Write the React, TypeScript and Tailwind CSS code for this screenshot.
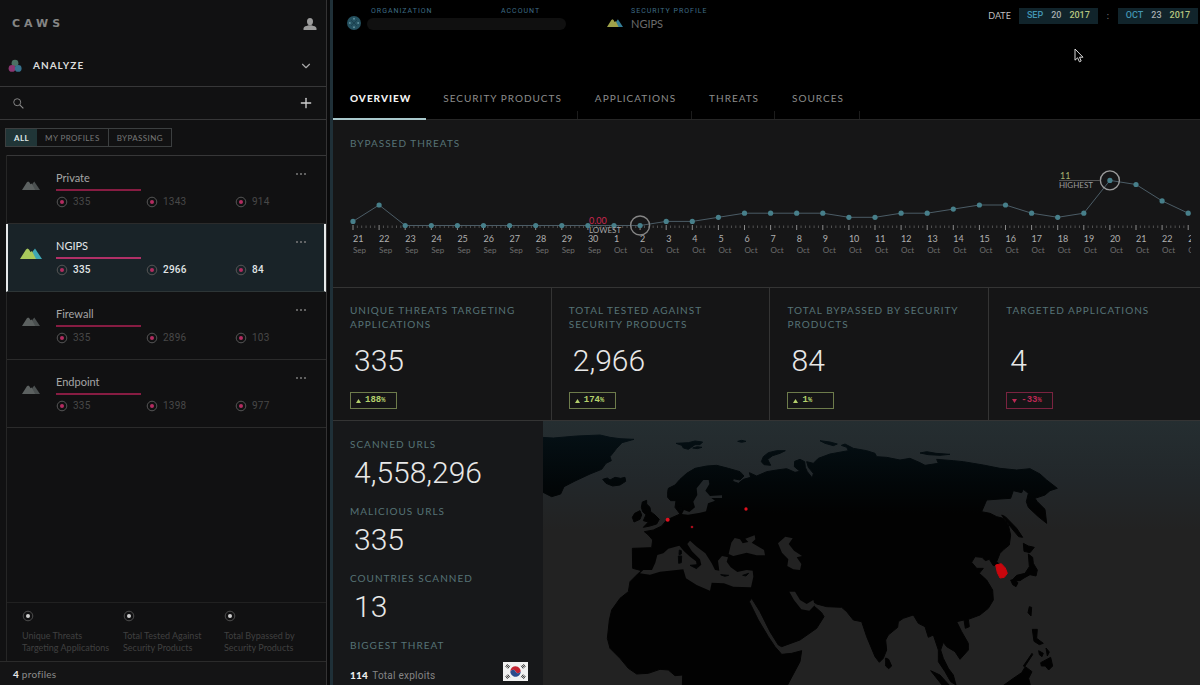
import React from "react";
import { ChevronDown, Plus } from "lucide-react";

const profiles = [
  { name: "Private", values: ["335", "1343", "914"], active: false },
  { name: "NGIPS", values: ["335", "2966", "84"], active: true },
  { name: "Firewall", values: ["335", "2896", "103"], active: false },
  { name: "Endpoint", values: ["335", "1398", "977"], active: false },
];

const legend = [
  ["Unique Threats", "Targeting Applications"],
  ["Total Tested Against", "Security Products"],
  ["Total Bypassed by", "Security Products"],
];

const tabs = ["OVERVIEW", "SECURITY PRODUCTS", "APPLICATIONS", "THREATS", "SOURCES"];

const stats = [
  { label: "UNIQUE THREATS TARGETING APPLICATIONS", value: "335", change: "188", up: true },
  { label: "TOTAL TESTED AGAINST SECURITY PRODUCTS", value: "2,966", change: "174", up: true },
  { label: "TOTAL BYPASSED BY SECURITY PRODUCTS", value: "84", change: "1", up: true },
  { label: "TARGETED APPLICATIONS", value: "4", change: "-33", up: false },
];

const scans = [
  { label: "SCANNED URLS", value: "4,558,296" },
  { label: "MALICIOUS URLS", value: "335" },
  { label: "COUNTRIES SCANNED", value: "13" },
];

const threats = [
  1, 5, 0, 0, 0, 0, 0, 0, 0, 0, 0, 0, 1, 1, 2, 3, 3, 3, 3, 2, 2, 3, 3, 4, 5, 5, 3, 2, 3, 11, 10, 6, 3,
];

function Mountains({ className, left, right }: { className: string; left: string; right: string }) {
  return (
    <svg viewBox="0 0 22 11" className={className} aria-hidden="true">
      <path d="M10 11 L13 3 L15 0.5 L22 11 Z" fill={right} />
      <path d="M0 11 L6 1.5 L7.5 0.5 L9 1.5 L10.5 4 L12 3 L16 11 Z" fill={left} />
    </svg>
  );
}

function Target({ ring, dot }: { ring: string; dot: string }) {
  return (
    <svg viewBox="0 0 12 12" className="size-3 shrink-0" aria-hidden="true">
      <circle cx="6" cy="6" r="4.8" fill="none" stroke={ring} strokeWidth="1" />
      <circle cx="6" cy="6" r="2" fill={dot} />
    </svg>
  );
}

function Sidebar() {
  return (
    <aside className="flex w-[327px] shrink-0 flex-col border-r border-[#343334] bg-[#111112]">
      <div className="flex h-[46px] items-center justify-between pt-[2px] pr-[9px] pl-3">
        <span className="font-['DejaVu_Sans'] text-[11px] font-bold tracking-[4px] text-[#858585]">CAWS</span>
        <button aria-label="Account">
          <svg viewBox="0 0 14 12" className="h-3 w-[14px]" fill="#9b9b9b" aria-hidden="true">
            <ellipse cx="7" cy="3.6" rx="3" ry="3.6" />
            <path d="M0.5 12 V10.5 Q0.5 8.4 3.6 7.9 L5.4 7.2 H8.6 L10.4 7.9 Q13.5 8.4 13.5 10.5 V12 Z" />
          </svg>
        </button>
      </div>
      <button className="flex h-[41px] items-center border-b border-[#373738] pr-[13px] pb-px pl-2 text-left">
        <svg viewBox="0 0 14 14" className="size-[14px]" aria-hidden="true">
          <circle cx="7" cy="4.2" r="3.4" fill="#4b7164" />
          <circle cx="4" cy="9.4" r="3.4" fill="#8a3670" />
          <circle cx="10.2" cy="9.4" r="3.4" fill="#36718c" />
        </svg>
        <span className="ml-[11px] flex-1 text-[10px] font-bold tracking-[1px] text-[#dcdcdc]">ANALYZE</span>
        <ChevronDown className="size-[14px] text-[#a9a9a9]" strokeWidth={2} />
      </button>
      <div className="flex h-[33px] items-center border-b border-[#373738] pr-3 pl-[13px]">
        <svg viewBox="0 0 12 12" className="size-[11px]" fill="none" stroke="#8d8d8d" aria-hidden="true">
          <circle cx="4.6" cy="4.6" r="3.8" />
          <path d="M7.4 7.4 L11.3 11.3" strokeWidth="1.2" />
        </svg>
        <input type="search" aria-label="Search profiles" className="mx-2 min-w-0 flex-1 bg-transparent text-xs text-[#cfcfcf] outline-none" />
        <button aria-label="Add profile">
          <Plus className="size-4 text-[#d0d0d0]" strokeWidth={2} />
        </button>
      </div>
      <div className="flex h-[35px] items-center pl-[5px]">
        <div className="flex h-[19px] border border-[#3c3f40] text-[8px] tracking-wider text-[#777]">
          <button className="bg-[#203537] px-2 font-bold text-[#dfe8e8]">ALL</button>
          <button className="px-2">MY PROFILES</button>
          <button className="border-l border-[#3c3f40] px-2">BYPASSING</button>
        </div>
      </div>
      <div className="ml-[6px] flex flex-1 flex-col border-l border-[#262626]">
        <ul className="border-t border-[#373738]">
          {profiles.map((p) => (
            <li
              key={p.name}
              className={
                p.active
                  ? "-ml-px flex h-[68px] border-x-2 border-b border-x-[#e6e9ea] border-b-[#2d3536] bg-[#192328] pr-[18px] pl-[13px]"
                  : "flex h-[68px] border-b border-[#2b2b2b] pr-5 pl-[14px]"
              }
            >
              <div className="flex w-[35px] shrink-0 items-start pt-6">
                {p.active ? (
                  <Mountains className="-ml-px h-[11px] w-[22px]" left="#a9c95c" right="#3fa7b5" />
                ) : (
                  <Mountains className="mt-px ml-px h-[9px] w-[18px]" left="#5c6160" right="#4b5050" />
                )}
              </div>
              <div className="flex-1 pt-[15px]">
                <h3 className={p.active ? "text-[11px] leading-[14px] text-[#e3e7e8]" : "text-[11px] leading-[14px] text-[#a5a5a5]"}>{p.name}</h3>
                <div className={p.active ? "mt-1 h-[2px] w-[85px] bg-[#b13067]" : "mt-1 h-[2px] w-[85px] bg-[#871c42]"} />
                <div
                  className={
                    p.active
                      ? "mt-[5px] grid grid-cols-[90px_89px_1fr] font-['Roboto'] text-[10px] leading-3 font-medium tracking-wide text-[#e0e5e6]"
                      : "mt-[5px] grid grid-cols-[90px_89px_1fr] font-['Roboto'] text-[10px] leading-3 tracking-wide text-[#484848]"
                  }
                >
                  {p.values.map((v) => (
                    <span key={v} className="flex items-center gap-[5px]">
                      <Target ring="#555" dot="#b32c60" />
                      {v}
                    </span>
                  ))}
                </div>
              </div>
              <button aria-label={`${p.name} options`} className="mt-[17px] flex h-1 gap-[2px]">
                <span className="size-[2px] rounded-full bg-[#7b7b7b]" />
                <span className="size-[2px] rounded-full bg-[#7b7b7b]" />
                <span className="size-[2px] rounded-full bg-[#7b7b7b]" />
              </button>
            </li>
          ))}
        </ul>
        <div className="flex-1" />
        <div className="grid h-[59px] grid-cols-[101px_101px_1fr] border-t border-[#212121] pt-[7px] pl-[15px]">
          {legend.map(([a, b]) => (
            <div key={a} className="text-[9px] leading-3 whitespace-nowrap text-[#404040]">
              <Target ring="#4c4c4c" dot="#cfcfcf" />
              <p className="mt-2">
                {a}
                <br />
                {b}
              </p>
            </div>
          ))}
        </div>
      </div>
      <footer className="h-6 border-t border-[#2b2b2b] bg-[#141415] pl-[13px] text-[10px] leading-[24px] tracking-wide text-[#8c8c8c]">
        <b className="text-[#e8e8e8]">4</b> profiles
      </footer>
    </aside>
  );
}

function DateField({ month, day, year }: { month: string; day: string; year: string }) {
  return (
    <button className="flex h-4 items-center gap-2 bg-[#11242b] px-2 font-['Roboto'] text-[9px] font-medium">
      <span className="text-[#4295b3]">{month}</span>
      <span className="text-[#a5acae]">{day}</span>
      <span className="text-[#b7c67f]">{year}</span>
    </button>
  );
}

function Header() {
  return (
    <header className="relative flex h-[120px] flex-col justify-between border-b border-[#262626] bg-black">
      <div className="flex items-start justify-between pt-[7px] pr-[2px] pl-[14px]">
        <div className="flex items-start">
          <svg viewBox="0 0 14 14" className="mt-[9px] size-[14px]" aria-hidden="true">
            <circle cx="7" cy="7" r="7" fill="#24505f" />
            <g fill="#5e8d99">
              <circle cx="7" cy="2.8" r="1" />
              <circle cx="7" cy="11.2" r="1" />
              <circle cx="2.8" cy="7" r="1" />
              <circle cx="11.2" cy="7" r="1" />
            </g>
            <path d="M4 4 L10 10 M10 4 L4 10" stroke="#1b4150" strokeWidth="1" />
          </svg>
          <div className="ml-[6px] w-[240px] font-['Roboto'] text-[7px] leading-[9px] tracking-[1px] text-[#3f6c86]">
            <div className="grid grid-cols-[130px_1fr] pl-1">
              <span>ORGANIZATION</span>
              <span>ACCOUNT</span>
            </div>
            <div className="mt-[2px] h-3 w-[199px] rounded-full bg-[#101010]" />
          </div>
          <Mountains className="mt-3 h-2 w-4" left="#9fa24a" right="#357d96" />
          <div className="ml-2">
            <p className="font-['Roboto'] text-[7px] leading-[9px] tracking-[1px] text-[#3f6c86]">SECURITY PROFILE</p>
            <p className="text-[11px] leading-4 text-[#6b6b6b]">NGIPS</p>
          </div>
        </div>
        <div className="flex items-center pt-px text-[9px] text-[#bfbfbf]">
          <span>DATE</span>
          <span className="ml-2">
            <DateField month="SEP" day="20" year="2017" />
          </span>
          <span className="w-5 text-center text-[#777]">:</span>
          <DateField month="OCT" day="23" year="2017" />
        </div>
      </div>
      <nav className="flex text-[10px] leading-3 tracking-[1px]">
        {tabs.map((t, i) => (
          <a
            key={t}
            href="#"
            className={
              i === 0
                ? "-mb-px flex h-[28px] items-start border-b-2 border-[#a9c9cd] pr-[15px] pl-[17px] font-black text-[#f2f2f2]"
                : "flex h-[27px] items-start bg-[linear-gradient(#1c1c1c,#1c1c1c)] bg-[length:1px_8px] bg-right-bottom bg-no-repeat pr-4 pl-[17px] text-[#8c8c8c]"
            }
          >
            {t}
          </a>
        ))}
      </nav>
      <svg viewBox="0 0 10 15" className="absolute top-[48px] right-[116px] h-[15px] w-[10px]" aria-hidden="true">
        <path d="M1 1 V12.2 L3.6 9.8 L5.4 13.8 L7.2 13 L5.5 9.2 H9 Z" fill="#000" stroke="#d8d8d8" strokeWidth="1" />
      </svg>
    </header>
  );
}

function ThreatChart() {
  const step = 26.1;
  const x = (i: number) => 20 + i * step;
  const y = (v: number) => 65.5 - v * 4.1;
  const points = threats.map((v, i) => `${x(i)},${y(v)}`).join(" ");
  return (
    <svg viewBox="0 0 867 110" className="block w-full" role="img" aria-label="Bypassed threats per day">
      <clipPath id="plot">
        <rect x="10" y="0" width="848" height="110" />
      </clipPath>
      <g clipPath="url(#plot)">
        {Array.from({ length: 193 }, (_, i) => (
          <line key={i} x1={20 + i * 4.35} x2={20 + i * 4.35} y1={i % 6 ? 65.5 : 65} y2={i % 6 ? 68 : 70} stroke={i % 6 ? "#505050" : "#8a8a8a"} />
        ))}
        <polyline points={points} fill="none" stroke="#4b5c66" />
        {threats.map((v, i) => {
          const sept = i < 10;
          return (
            <g key={i}>
              <circle cx={x(i)} cy={y(v)} r="2.6" fill="#477f8a" />
              <text x={x(i)} y="82" className="font-['Lato'] text-[9px]" fill="#b0b0b0">
                {sept ? 21 + i : i - 9}
              </text>
              <text x={x(i)} y="93" className="font-['Lato'] text-[8px]" fill="#6e6e6e">
                {sept ? "Sep" : "Oct"}
              </text>
            </g>
          );
        })}
      </g>
      <circle cx={x(11)} cy="65.5" r="9.5" fill="none" stroke="#858585" strokeWidth="1.4" />
      <circle cx={x(29)} cy={y(11)} r="9.5" fill="none" stroke="#9a9a9a" strokeWidth="1.4" />
      <text x="256" y="64" className="font-['Lato'] text-[9px]" fill="#c9264f">0.00</text>
      <text x="256" y="73" className="font-['Lato'] text-[8px]" fill="#a5a5a5">LOWEST</text>
      <line x1="726" x2="767" y1="20.5" y2="20.5" stroke="#555" />
      <text x="727" y="19" className="font-['Lato'] text-[9px]" fill="#a5b070">11</text>
      <text x="726" y="28" className="font-['Lato'] text-[8px]" fill="#9a9a9a">HIGHEST</text>
    </svg>
  );
}

function Stats() {
  return (
    <section className="grid h-[134px] grid-cols-[219fr_219fr_219fr_211fr] border-y border-[#343434] bg-[#151516]">
      {stats.map((s) => (
        <article key={s.label} className="border-r border-[#343434] pt-[15px] pr-4 pl-[17px] last:border-r-0">
          <h2 className="h-[28px] text-[10px] leading-[14px] tracking-[1px] text-[#567376]">{s.label}</h2>
          <p className="mt-3 pl-1 font-['Roboto'] text-[30px] leading-9 font-light text-[#e8e8e8]">{s.value}</p>
          <p
            className={
              s.up
                ? "mt-[13px] flex h-[17px] w-[47px] items-center gap-1 border border-[#6d7b4b] pl-[5px] font-['Liberation_Mono'] text-[9px] font-bold text-[#b4d06c]"
                : "mt-[13px] flex h-[17px] w-[47px] items-center gap-1 border border-[#7a2340] pl-[5px] font-['Liberation_Mono'] text-[9px] font-bold text-[#bd2854]"
            }
          >
            <svg viewBox="0 0 5 4" className="h-1 w-[5px]" fill="currentColor" aria-hidden="true">
              <path d={s.up ? "M0 4 L2.5 0 L5 4 Z" : "M0 0 L2.5 4 L5 0 Z"} />
            </svg>
            <span>
              {s.change}
              <span className="text-[7px]">%</span>
            </span>
          </p>
        </article>
      ))}
    </section>
  );
}

const land = [
  // Eurasia and Africa
  "M203 215 205 205 225 195 240 178 260 160 285 145 320 138 350 136 385 145 420 155 432 168 420 180 400 176 398 184 415 190 430 178 452 172 448 158 470 168 500 155 530 150 560 146 585 157 600 154 583 140 584 124 600 118 614 125 616 142 622 155 637 174 640 160 625 142 620 125 640 130 655 115 690 102 745 92 740 82 724 76 735 72 760 85 800 92 825 100 830 110 860 112 900 120 930 115 960 128 975 136 1015 130 1010 118 1060 122 1090 125 1150 135 1200 145 1250 150 1290 146 1320 162 1340 180 1372 205 1350 212 1335 225 1305 235 1312 245 1335 268 1340 310 1315 290 1285 262 1279 245 1285 220 1270 208 1265 218 1240 212 1232 235 1200 237 1160 240 1145 275 1170 280 1190 290 1210 295 1225 315 1232 345 1228 375 1212 388 1200 400 1190 425 1200 434 1180 437 1168 418 1156 422 1146 412 1125 410 1115 427 1130 445 1150 445 1138 460 1160 480 1178 510 1180 540 1165 565 1140 585 1105 598 1108 620 1096 625 1092 600 1070 605 1085 635 1105 670 1105 690 1080 718 1065 695 1040 680 1030 667 1022 690 1030 715 1045 745 1060 765 1068 795 1052 785 1035 755 1015 725 1015 690 1000 645 985 652 975 620 955 610 940 585 910 595 895 605 893 622 865 645 857 660 860 690 850 715 838 727 825 710 800 650 785 605 760 600 740 575 725 562 680 560 650 552 640 545 642 558 665 578 672 590 650 625 600 660 545 680 535 675 510 635 480 575 455 535 448 545 475 600 505 650 525 680 545 703 575 700 605 692 600 725 560 800 247 800 248 765 225 767 205 750 180 748 145 760 110 762 85 745 60 715 30 685 22 655 28 600 35 570 60 535 85 515 90 485 115 460 125 452 98 445 97 385 155 383 158 360 145 345 133 335 160 330 185 318 200 300 222 290 240 282 225 262 228 242 212 242 203 232Z",
  // Greenland
  "M-175 52 -140 54 -70 48 0 45 30 52 60 56 102 58 66 68 50 85 40 98 30 110 34 122 18 130 5 148 -30 162 -75 183 -108 200 -118 222 -145 230 -175 215Z",
  "M8 178 22 174 30 180 45 172 62 175 75 172 77 184 60 195 38 198 18 190Z",
  "M228 70 265 68 285 63 308 66 300 74 285 74 265 88 250 84 245 76Z",
  "M278 84 292 80 306 82 292 86Z",
  "M413 64 425 61 438 64 425 67Z",
  "M484 125 490 110 505 98 530 92 556 92 540 100 518 107 503 118 512 136 492 134Z",
  "M660 62 690 66 712 72 700 77 675 70Z",
  "M960 99 980 95 1008 100 1050 103 1020 106 985 104Z",
  // British Isles
  "M124 262 127 246 140 241 140 252 150 262 152 275 165 285 178 298 170 312 150 318 130 322 145 306 130 302 138 284 128 275Z",
  "M97 292 104 280 120 272 125 285 120 298 102 306Z",
  // Japan, Sakhalin and the Pacific islands
  "M1205 285 1216 290 1250 325 1268 352 1256 350 1235 325Z",
  "M1270 370 1285 378 1303 382 1290 398 1272 394Z",
  "M1285 402 1298 412 1300 430 1312 450 1308 468 1290 464 1272 474 1260 482 1235 482 1250 466 1275 460 1288 440Z",
  "M1232 480 1245 480 1254 488 1248 500 1238 494Z",
  "M1288 560 1295 562 1293 588 1284 578Z",
  "M1297 628 1312 628 1310 655 1330 670 1318 674 1302 664Z",
  "M1316 692 1330 700 1326 710 1318 704ZM1338 684 1348 696 1342 708Z",
  "M1322 728 1352 712 1358 738 1346 750 1336 738 1324 738Z",
  "M1205 800 1240 775 1265 758 1276 740 1296 755 1286 775 1292 800Z",
  "M1270 738 1296 700 1298 704 1274 740Z",
  "M992 752 1020 765 1052 800 1030 800Z",
  "M857 714 866 718 875 738 866 746 857 738Z",
  "M1272 790 1280 788 1280 800 1272 800Z",
].join("");

const water = [
  // Baltic
  "M326 180 310 180 290 205 292 225 280 245 285 262 268 276 252 270 246 282 264 284 300 278 318 274 324 250 345 242 334 234 366 234 366 226 330 228 316 212 328 192Z",
  // Mediterranean and Adriatic
  "M120 460 130 450 156 450 166 428 172 405 190 400 205 386 238 377 252 394 270 410 288 424 292 445 304 434 300 418 276 394 262 372 270 362 290 380 316 400 335 430 345 450 358 452 354 422 366 408 384 412 380 425 392 442 412 456 440 450 458 452 460 470 453 502 400 500 372 490 335 488 330 512 290 495 258 475 250 448 180 455 150 464Z",
  // Black Sea
  "M394 368 404 354 420 358 428 370 445 366 436 356 464 346 466 358 455 368 492 390 495 406 470 406 440 398 400 408 386 402Z",
  // Caspian
  "M534 370 556 350 578 355 566 372 582 392 606 408 590 412 604 432 600 450 580 448 562 438 565 418 546 398Z",
  // Persian Gulf
  "M568 515 585 515 600 540 620 552 640 540 644 556 628 572 604 568 582 540Z",
].join("");

const islands =
  "M238 390 244 392 244 402 237 404ZM235 408 245 408 244 428 236 430ZM270 436 292 434 290 446ZM362 464 386 466 374 469ZM428 466 446 460 438 468ZM236 262 246 262 244 274Z";

function WorldMap() {
  return (
    <svg viewBox="-171 3 1971 792" preserveAspectRatio="xMidYMin slice" className="absolute inset-0 size-full" role="img" aria-label="Map of threat sources">
      <defs>
        <linearGradient id="sea" gradientUnits="userSpaceOnUse" x1="0" y1="0" x2="0" y2="330">
          <stop offset="0" stopColor="#252e31" />
          <stop offset="0.55" stopColor="#22272a" />
          <stop offset="1" stopColor="#222222" />
        </linearGradient>
        <linearGradient id="ground" gradientUnits="userSpaceOnUse" x1="0" y1="40" x2="0" y2="280">
          <stop offset="0" stopColor="#051015" />
          <stop offset="0.6" stopColor="#020709" />
          <stop offset="1" stopColor="#020202" />
        </linearGradient>
      </defs>
      <rect x="-171" y="0" width="1971" height="800" fill="url(#sea)" />
      <path d={land} fill="url(#ground)" stroke="url(#ground)" strokeWidth="3" strokeLinejoin="round" />
      <path d={water} fill="url(#sea)" />
      <path d={islands} fill="url(#ground)" stroke="#030506" strokeWidth="3" />
      <circle cx="203" cy="299" r="6" fill="#e0101e" />
      <circle cx="276" cy="321" r="4" fill="#a80c1a" />
      <circle cx="438" cy="267" r="5" fill="#e0101e" />
      <path d="M1187 435 1204 431 1216 444 1222 460 1213 472 1200 474 1192 458Z" fill="#c9060d" stroke="#c9060d" strokeWidth="3" strokeLinejoin="round" />
    </svg>
  );
}

function KoreanFlag() {
  return (
    <svg viewBox="0 0 25 19" className="h-[19px] w-[25px]" role="img" aria-label="South Korea">
      <rect width="25" height="19" fill="#f1f1f1" />
      <g transform="rotate(-20 12.5 9.5)">
        <path d="M7.3 9.5 A5.2 5.2 0 0 1 17.7 9.5 A2.6 2.6 0 0 1 12.5 9.5 A2.6 2.6 0 0 0 7.3 9.5Z" fill="#c32230" />
        <path d="M7.3 9.5 A2.6 2.6 0 0 1 12.5 9.5 A2.6 2.6 0 0 0 17.7 9.5 A5.2 5.2 0 0 1 7.3 9.5Z" fill="#2b4b8c" />
      </g>
      <g stroke="#222" strokeWidth="0.9">
        <path d="M2.6 4.9 L4.6 2.2 M3.7 5.7 L5.7 3 M4.8 6.5 L6.8 3.8" />
        <path d="M2.6 14.1 L4.6 16.8 M3.7 13.3 L5.7 16 M4.8 12.5 L6.8 15.2" />
        <path d="M22.4 4.9 L20.4 2.2 M21.3 5.7 L19.3 3 M20.2 6.5 L18.2 3.8" />
        <path d="M22.4 14.1 L20.4 16.8 M21.3 13.3 L19.3 16 M20.2 12.5 L18.2 15.2" />
      </g>
    </svg>
  );
}

export default function App() {
  return (
    <div className="flex min-h-screen bg-[#0a0a0b] font-['Lato',sans-serif]">
      <Sidebar />
      <main className="ml-[3px] flex min-w-0 flex-1 flex-col border-l-3 border-[#1f3038] bg-[#161617]">
        <Header />
        <section className="h-[167px] pt-[17px]">
          <h2 className="pl-[17px] text-[10px] leading-3 tracking-[1px] text-[#567376]">BYPASSED THREATS</h2>
          <div className="mt-[11px]">
            <ThreatChart />
          </div>
        </section>
        <Stats />
        <section className="flex min-h-[264px] flex-1">
          <div className="flex w-[210px] shrink-0 flex-col bg-[#17181a] pt-[17px] pr-[15px] pl-[17px]">
            {scans.map((s) => (
              <div key={s.label} className="h-[67px]">
                <h2 className="text-[10px] leading-3 tracking-[1px] text-[#567376]">{s.label}</h2>
                <p className="mt-[5px] pl-1 font-['Roboto'] text-[30px] leading-9 font-light text-[#e8e8e8]">{s.value}</p>
              </div>
            ))}
            <h2 className="text-[10px] leading-3 tracking-[1px] text-[#567376]">BIGGEST THREAT</h2>
            <div className="mt-2 flex items-center justify-between">
              <p className="pt-2 font-['Roboto'] text-[10px] leading-4 tracking-wide text-[#858585]">
                <b className="mr-1 font-['Lato'] font-black text-[#ececec]">114</b>
                Total exploits
              </p>
              <KoreanFlag />
            </div>
          </div>
          <div className="relative flex-1 overflow-hidden">
            <WorldMap />
          </div>
        </section>
      </main>
    </div>
  );
}
